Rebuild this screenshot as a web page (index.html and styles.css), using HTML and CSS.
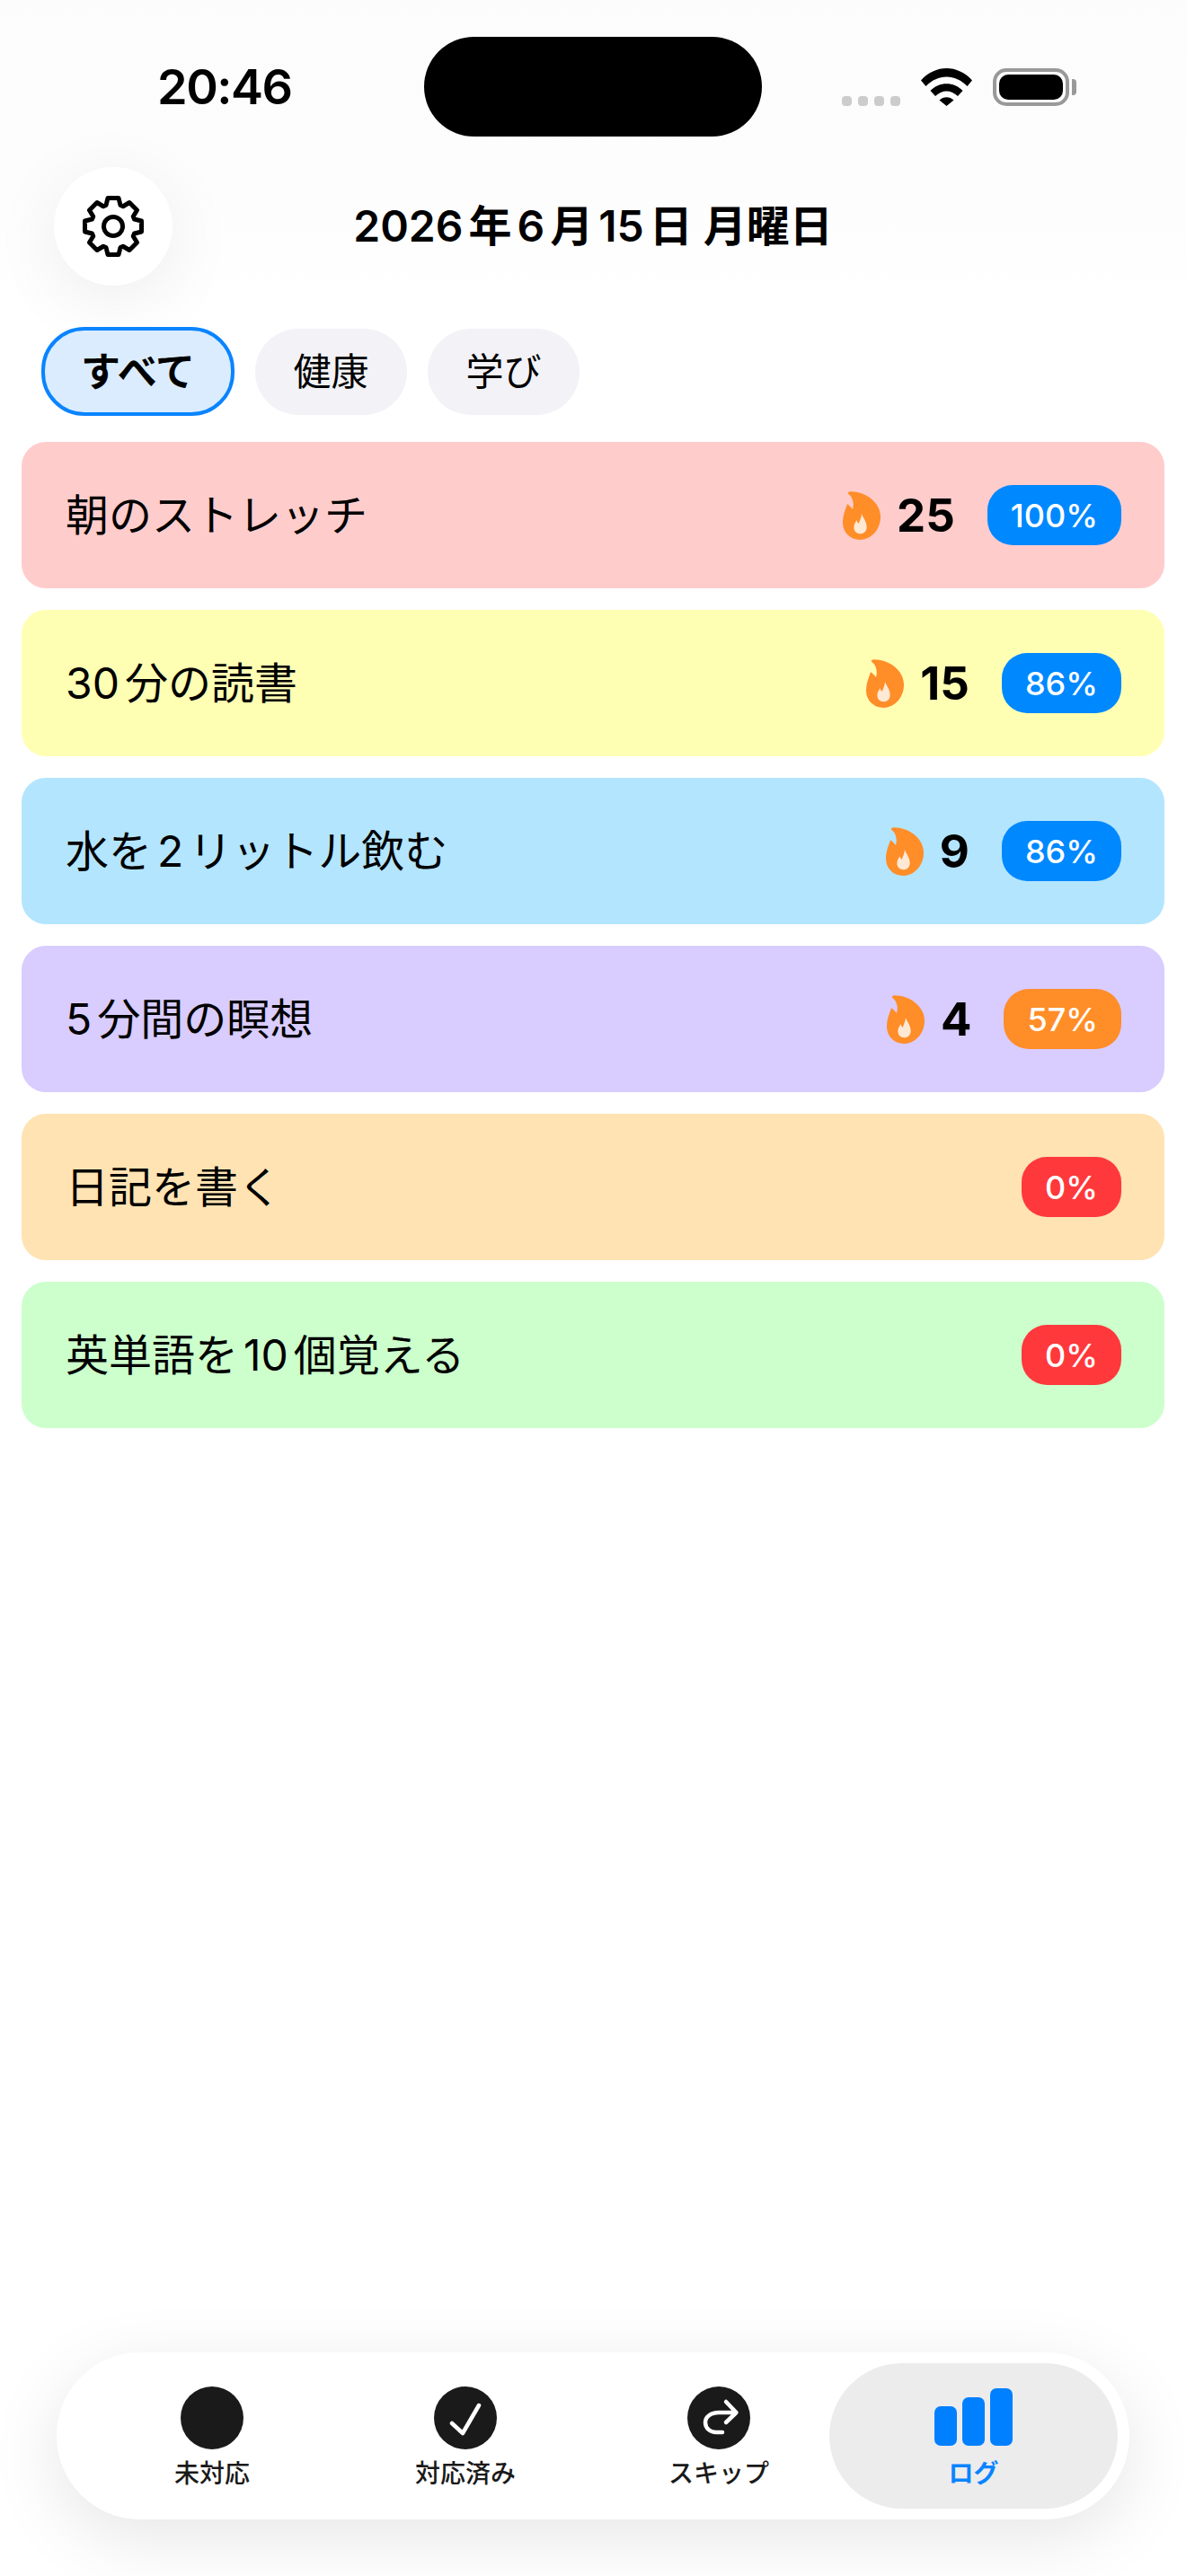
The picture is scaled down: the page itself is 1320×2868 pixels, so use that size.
FILE: index.html
```html
<!DOCTYPE html>
<html lang="ja">
<head>
  <meta charset="UTF-8">
  <title>習慣ログ</title>
  <link rel="stylesheet" href="styles.css">
</head>
<body>

<div class="yla-varjo"></div>

<div class="statusrivi">
  <div class="kello">20:46</div>
  <div class="saari"></div>
  <div class="tila">
    <div class="pisteet"><span></span><span></span><span></span><span></span></div>
    <svg class="wifi" viewBox="0 0 57 42">
      <path d="M0 13.5 C16 -4.5 41 -4.5 57 13.5 L51.5 20 C38 6 19 6 5.5 20 Z"/>
      <path d="M10.5 25 C20 14.5 37 14.5 46.5 25 L41 31 C33.5 23.5 23.5 23.5 16 31 Z"/>
      <path d="M20.5 35.5 C25 31 32 31 36.5 35.5 L28.5 42 Z"/>
    </svg>
    <div class="akku"><div class="akku-taso"></div></div>
    <div class="akku-nasta"></div>
  </div>
</div>

<div class="otsake">
  <div class="asetus">
    <svg viewBox="-36 -36 72 72" width="72" height="72">
      <path class="ratas" d="M-8 -23.5 L-6 -31.5 L6 -31.5 L8 -23.5 L10.96 -22.27 L18.03 -26.5 L26.5 -18.03 L22.27 -10.96 L23.5 -8 L31.5 -6 L31.5 6 L23.5 8 L22.27 10.96 L26.5 18.03 L18.03 26.5 L10.96 22.27 L8 23.5 L6 31.5 L-6 31.5 L-8 23.5 L-10.96 22.27 L-18.03 26.5 L-26.5 18.03 L-22.27 10.96 L-23.5 8 L-31.5 6 L-31.5 -6 L-23.5 -8 L-22.27 -10.96 L-26.5 -18.03 L-18.03 -26.5 L-10.96 -22.27 Z"/>
      <circle class="ratas" cx="0" cy="0" r="10.5"/>
    </svg>
  </div>
  <h1 class="paiva">2026年6月15日 月曜日</h1>
</div>

<div class="sirut">
  <div class="siru valittu">すべて</div>
  <div class="siru">健康</div>
  <div class="siru">学び</div>
</div>

<div class="lista">
  <div class="kortti punainen">
    <div class="nimi">朝のストレッチ</div>
    <div class="putki">
      <svg class="liekki" viewBox="57 50 126 162"><path class="liekki-ulko" d="M82 51 C130 50 183 85 183 135 C183 180 150 212 115 212 C80 212 57 185 57 155 C57 130 66 112 72 93 C78 96 84 104 90 110 C96 90 90 68 75 58 C74 54 77 51 82 51 Z"/><path class="liekki-sisa" d="M120 125 C125 140 137 150 137 170 C137 183 127 192 115 192 C103 192 94 183 94 171 C94 160 100 152 104 147 C105 152 107 156 110 157 C114 148 119 138 120 125 Z"/></svg>
      <span class="luku">25</span>
    </div>
    <div class="pros sininen">100%</div>
  </div>
  <div class="kortti keltainen">
    <div class="nimi">30分の読書</div>
    <div class="putki">
      <svg class="liekki" viewBox="57 50 126 162"><path class="liekki-ulko" d="M82 51 C130 50 183 85 183 135 C183 180 150 212 115 212 C80 212 57 185 57 155 C57 130 66 112 72 93 C78 96 84 104 90 110 C96 90 90 68 75 58 C74 54 77 51 82 51 Z"/><path class="liekki-sisa" d="M120 125 C125 140 137 150 137 170 C137 183 127 192 115 192 C103 192 94 183 94 171 C94 160 100 152 104 147 C105 152 107 156 110 157 C114 148 119 138 120 125 Z"/></svg>
      <span class="luku">15</span>
    </div>
    <div class="pros sininen">86%</div>
  </div>
  <div class="kortti vaaleansininen">
    <div class="nimi">水を2リットル飲む</div>
    <div class="putki">
      <svg class="liekki" viewBox="57 50 126 162"><path class="liekki-ulko" d="M82 51 C130 50 183 85 183 135 C183 180 150 212 115 212 C80 212 57 185 57 155 C57 130 66 112 72 93 C78 96 84 104 90 110 C96 90 90 68 75 58 C74 54 77 51 82 51 Z"/><path class="liekki-sisa" d="M120 125 C125 140 137 150 137 170 C137 183 127 192 115 192 C103 192 94 183 94 171 C94 160 100 152 104 147 C105 152 107 156 110 157 C114 148 119 138 120 125 Z"/></svg>
      <span class="luku">9</span>
    </div>
    <div class="pros sininen">86%</div>
  </div>
  <div class="kortti violetti">
    <div class="nimi">5分間の瞑想</div>
    <div class="putki">
      <svg class="liekki" viewBox="57 50 126 162"><path class="liekki-ulko" d="M82 51 C130 50 183 85 183 135 C183 180 150 212 115 212 C80 212 57 185 57 155 C57 130 66 112 72 93 C78 96 84 104 90 110 C96 90 90 68 75 58 C74 54 77 51 82 51 Z"/><path class="liekki-sisa" d="M120 125 C125 140 137 150 137 170 C137 183 127 192 115 192 C103 192 94 183 94 171 C94 160 100 152 104 147 C105 152 107 156 110 157 C114 148 119 138 120 125 Z"/></svg>
      <span class="luku">4</span>
    </div>
    <div class="pros oranssi">57%</div>
  </div>
  <div class="kortti persikka">
    <div class="nimi">日記を書く</div>
    <div class="pros punainen-pros">0%</div>
  </div>
  <div class="kortti vihrea">
    <div class="nimi">英単語を10個覚える</div>
    <div class="pros punainen-pros">0%</div>
  </div>
</div>

<div class="alapalkki">
  <div class="kohta">
    <svg class="kuvake" viewBox="-35 -35 70 70"><circle r="35" class="kuvake-pohja"/></svg>
    <div class="teksti">未対応</div>
  </div>
  <div class="kohta">
    <svg class="kuvake" viewBox="-35 -35 70 70"><circle r="35" class="kuvake-pohja"/><path class="kuvake-viiva" d="M-15 6 L-3 17 L15 -14"/></svg>
    <div class="teksti">対応済み</div>
  </div>
  <div class="kohta">
    <svg class="kuvake" viewBox="-35 -35 70 70"><circle r="35" class="kuvake-pohja"/><path class="kuvake-viiva" d="M8 -18 L19.5 -6 L8 5 M19 -6 H0 C-9 -6 -15 -1 -15 5 C-15 12 -9 16 -3 16 H4"/></svg>
    <div class="teksti">スキップ</div>
  </div>
  <div class="kohta aktiivinen">
    <div class="palkit">
      <span class="palkki p1"></span>
      <span class="palkki p2"></span>
      <span class="palkki p3"></span>
    </div>
    <div class="teksti">ログ</div>
  </div>
</div>

</body>
</html>
```

FILE: styles.css
```css
html, body {
  margin: 0;
  padding: 0;
}
body {
  width: 1320px;
  height: 2868px;
  overflow: hidden;
  position: relative;
  display: flex;
  flex-direction: column;
  background: #fff;
  color: #000;
  font-family: Inter, "Noto Sans CJK JP", sans-serif;
  text-autospace: normal;
}

/* haalea harmaa yläreunassa */
.yla-varjo {
  position: absolute;
  left: 0;
  top: 0;
  width: 1320px;
  height: 360px;
  background: linear-gradient(#fcfcfc, #fdfdfd 60%, #fff);
}

.statusrivi {
  position: relative;
  display: grid;
  grid-template-columns: 472px 376px 1fr;
  align-items: center;
  height: 111px;
  padding-top: 41px;
}
.kello {
  padding-left: 175px;
  font-size: 54px;
  font-weight: 600;
  letter-spacing: -1.5px;
  line-height: 111px;
}
.saari {
  height: 111px;
  background: #000;
  border-radius: 56px;
}
.tila {
  display: flex;
  align-items: flex-start;
  padding-left: 89px;
  height: 42px;
  margin-top: 1px;
}
.pisteet {
  display: flex;
  gap: 7px;
  margin-top: 31px;
}
.pisteet span {
  width: 11px;
  height: 11px;
  border-radius: 4px;
  background: #ccc;
}
.wifi {
  width: 57px;
  height: 42px;
  margin-left: 23px;
}
.akku {
  box-sizing: border-box;
  width: 85px;
  height: 42px;
  margin-left: 23px;
  padding: 3px;
  border: 4px solid #999;
  border-radius: 15px;
}
.akku-taso {
  height: 100%;
  background: #000;
  border-radius: 10px;
}
.akku-nasta {
  width: 5px;
  height: 18px;
  margin: 12px 0 0 3px;
  background: #999;
  border-radius: 0 4px 4px 0;
}

.otsake {
  position: relative;
  display: grid;
  grid-template-columns: 132px 1fr 132px;
  align-items: center;
  margin: 34px 60px 0;
  height: 132px;
}
.asetus {
  display: flex;
  align-items: center;
  justify-content: center;
  width: 132px;
  height: 132px;
  background: #fff;
  border-radius: 50%;
  box-shadow: 0 16px 80px rgba(0, 0, 0, 0.07);
}
.ratas {
  fill: none;
  stroke: #000;
  stroke-width: 5;
  stroke-linejoin: round;
}
.paiva {
  margin: 0;
  text-align: center;
  font-size: 48px;
  font-weight: 600;
  line-height: 132px;
  white-space: nowrap;
}

.sirut {
  position: relative;
  display: flex;
  align-items: center;
  gap: 23px;
  margin-top: 46px;
  padding-left: 46px;
  height: 99px;
}
.siru {
  box-sizing: border-box;
  display: flex;
  align-items: center;
  justify-content: center;
  width: 169px;
  height: 96px;
  background: #f2f2f7;
  border-radius: 48px;
  font-size: 42px;
  line-height: 1;
}
.siru.valittu {
  width: 215px;
  height: 99px;
  background: #dbecfe;
  border: 4px solid #0a84ff;
  font-size: 44px;
  font-weight: 700;
}

.lista {
  position: relative;
  display: flex;
  flex-direction: column;
  gap: 24px;
  margin: 29px 24px 0;
}
.kortti {
  display: flex;
  align-items: center;
  height: 163px;
  padding: 0 48px 0 49px;
  border-radius: 27px;
}
.nimi {
  flex: 1;
  font-size: 48px;
  line-height: 1;
}
.putki {
  display: flex;
  align-items: center;
  gap: 18px;
  margin-right: 36px;
}
.liekki {
  width: 42px;
  height: 54px;
}
.liekki-ulko {
  fill: #ff8d28;
}
.liekki-sisa {
  fill: #fff;
  opacity: 0.8;
}
.luku {
  font-size: 51px;
  font-weight: 700;
  line-height: 1;
}
.pros {
  display: flex;
  align-items: center;
  height: 67px;
  padding: 0 26px;
  border-radius: 28px;
  color: #fff;
  font-size: 36px;
  font-weight: 500;
}
.sininen { background: #0088ff; }
.oranssi { background: #ff8d28; }
.punainen-pros { background: #ff383c; }

.punainen { background: #ffcccc; }
.keltainen { background: #ffffb3; }
.vaaleansininen { background: #b3e5ff; }
.violetti { background: #d9ccff; }
.persikka { background: #ffe3b3; }
.vihrea { background: #ccffcc; }

.alapalkki {
  position: relative;
  box-sizing: border-box;
  display: grid;
  grid-template-columns: 218px 218px 218px 321px;
  column-gap: 64px;
  align-items: center;
  width: 1194px;
  height: 186px;
  margin: auto 0 63px 63px;
  padding-left: 64px;
  background: #fff;
  border-radius: 93px;
  box-shadow: 0 20px 80px rgba(0, 0, 0, 0.1);
}
.kohta {
  display: flex;
  flex-direction: column;
  align-items: center;
  height: 162px;
  padding-top: 26px;
  box-sizing: border-box;
}
.kuvake {
  width: 70px;
  height: 70px;
  display: block;
}
.kuvake-pohja {
  fill: #1a1a1a;
}
.kuvake-viiva {
  fill: none;
  stroke: #fff;
  stroke-width: 4.5;
  stroke-linecap: round;
  stroke-linejoin: round;
}
.teksti {
  margin-top: 10px;
  font-size: 28px;
  font-weight: 500;
  line-height: 34px;
  color: #1a1a1a;
}
.aktiivinen {
  width: 321px;
  margin-left: -50px;
  background: #ececec;
  border-radius: 81px;
}
.aktiivinen .teksti {
  color: #0a84ff;
  font-weight: 700;
}
.palkit {
  display: flex;
  align-items: flex-end;
  gap: 6px;
  height: 64px;
  margin: 2px 0 4px;
}
.palkki {
  width: 25px;
  background: #0080ff;
  border-radius: 7px;
}
.p1 { height: 44px; }
.p2 { height: 54px; }
.p3 { height: 64px; }
```
